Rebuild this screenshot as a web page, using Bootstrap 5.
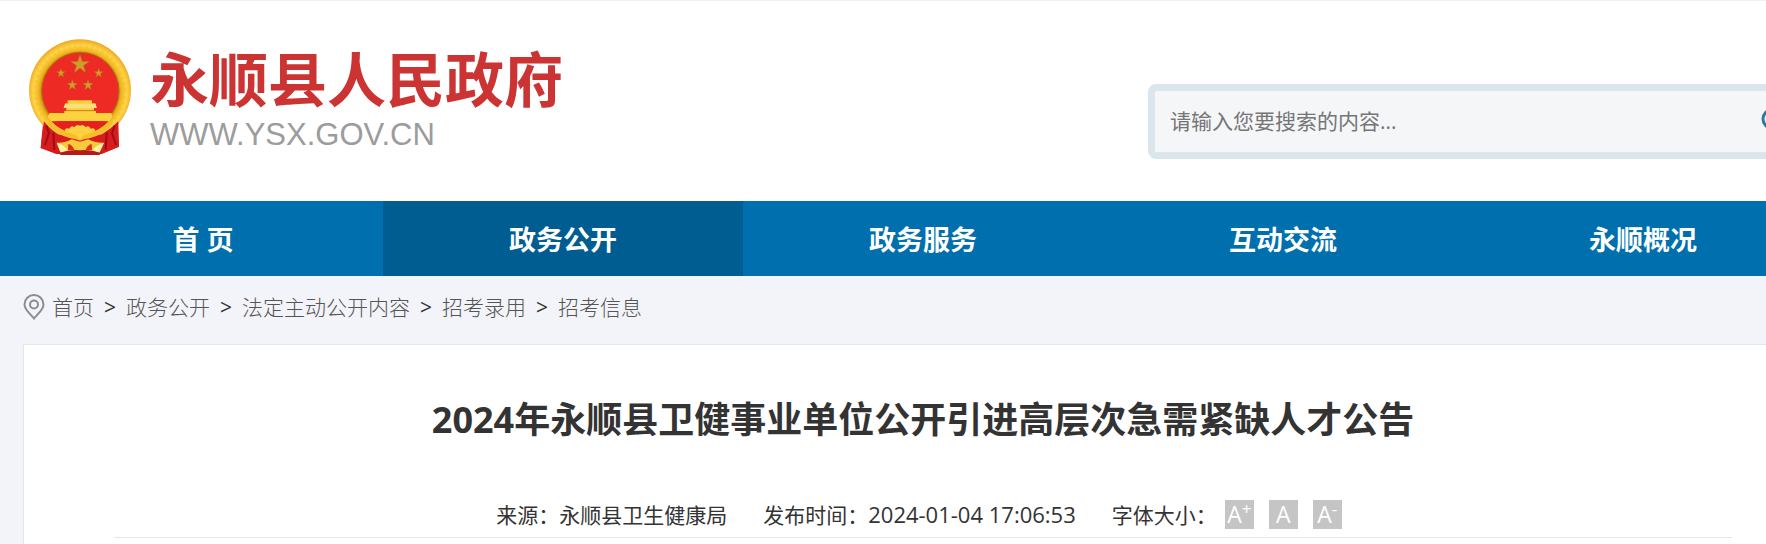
<!DOCTYPE html>
<html lang="zh-CN">
<head>
<meta charset="utf-8">
<meta name="viewport" content="width=device-width, initial-scale=1">
<title>2024年永顺县卫健事业单位公开引进高层次急需紧缺人才公告</title>
<link href="https://cdn.jsdelivr.net/npm/bootstrap@5.3.0/dist/css/bootstrap.min.css" rel="stylesheet">
<style>
  body { font-family: "Open Sans", "Noto Sans CJK SC", sans-serif; font-size: 21px; line-height: 28px; color: #333; background: #f3f4f9; overflow: hidden; }
  /* the page column starts 23px in and runs on past the right edge */
  .shell { margin-left: 23px; width: calc(100% + 34px); }
  .masthead { border-top: 1px solid #f0f0f0; }
  .masthead .shell { height: 200px; }
  .brand { margin-top: 36px; gap: 16px; }
  .brand-name { font-size: 59px; line-height: 84px; color: #cc3433; }
  .brand-url { font-family: "Liberation Sans", Arial, sans-serif; font-size: 31px; line-height: 28px; color: #9c9c9c; }
  .search-box { width: 675px; height: 75px; margin-top: 83px; border: 7px solid #dae6ec; border-radius: 8px; background: #f5f6f8; }
  .search-box input { font-size: 21px; color: #757575; padding: 0 15px; }
  .search-box input::placeholder { color: #757575; opacity: 1; }
  .search-box button { width: 60px; padding: 0; }
  .site-nav { background: #006fae; }
  .site-nav a { height: 75px; font-size: 27px; padding-top: 2px; }
  .site-nav a.active { background: #005d91; }
  .crumbs { height: 68px; padding-bottom: 6px; gap: 7px; }
  .crumbs .breadcrumb { --bs-breadcrumb-divider: ">"; --bs-breadcrumb-divider-color: #333; --bs-breadcrumb-item-padding-x: 10px; }
  .crumbs .breadcrumb-item::before { font-weight: 500; }
  .crumbs a { color: #555; }
  .article { background: #fff; border: 1px solid #e5e6e9; border-bottom: 0; min-height: 200px; padding: 51px 5% 0; }
  .article h1 { font-size: 36px; line-height: 48px; }
  .meta { margin-top: 48px; padding: 8px 8px 8px 0; border-bottom: 1px solid #e6e6e6; gap: 36px; }
  .stamp { font-size: 22px; }
  .size-btns { gap: 15px; margin-left: 8px; }
  .size-btn { width: 29px; height: 29px; background: #c5c5c5; color: #fff; font-size: 23px; line-height: 29px; }
  .size-btn sup { font-size: 17px; top: -8px; line-height: 0; }
</style>
</head>
<body>
<header class="masthead bg-white">
  <div class="shell d-flex justify-content-between align-items-start">
    <a href="#" class="brand d-flex text-decoration-none">
      <svg width="111" height="120" viewBox="69 51 333 360" role="img" aria-label="国徽">
        <defs>
          <radialGradient id="gold" cx="240" cy="215" r="155" gradientUnits="userSpaceOnUse">
            <stop offset=".74" stop-color="#c98a12"/><stop offset=".8" stop-color="#f2b51f"/><stop offset=".9" stop-color="#ffd84a"/><stop offset="1" stop-color="#f0aa25"/>
          </radialGradient>
          <path id="star" d="M0-30 7-9 29-9 11 4 18 26 0 12-18 26-11 4-29-9-7-9Z"/>
        </defs>
        <path d="M130 300 122 384 168 402H303L357 380 350 300Z" fill="#d81c1d"/>
        <path d="M136 318l-6 62M152 330l-4 62M345 318l6 60M328 330l4 60" stroke="#960d12" stroke-width="7"/>
        <ellipse cx="240" cy="211" rx="153" ry="153" fill="url(#gold)"/>
        <circle cx="240" cy="211" r="134" fill="none" stroke="#f3b52a" stroke-width="14" stroke-dasharray="9 8" opacity=".3"/>
        <circle cx="241" cy="213" r="116" fill="#ed2b24" stroke="#a87116" stroke-width="3"/>
        <g fill="#d39b28" stroke="#a55c15" stroke-width="1.5">
          <use href="#star" x="240" y="133"/>
          <use href="#star" transform="translate(183 159) scale(.48)"/>
          <use href="#star" transform="translate(296 159) scale(.48)"/>
          <use href="#star" transform="translate(217 195) scale(.55)"/>
          <use href="#star" transform="translate(264 195) scale(.55)"/>
        </g>
        <path d="M203 241H276V250H286L290 264H282V273H288V279H334L337 291 327 304H154L143 291 149 279H193V273H199V264H191L196 250H203Z" fill="#fcd33f"/>
        <path d="M195 252H287L290 264H191Z" fill="#f9df80"/>
        <path d="M199 272H282" stroke="#c97b1c" stroke-width="3"/>
        <path d="M154 304H327Q300 331 268 338H212Q176 329 154 304Z" fill="#e5201f"/>
        <path d="M132 304Q148 326 174 343L216 352 240 362 264 352 306 343Q334 326 355 304L357 380 303 403 313 370 268 363 240 365 212 363 170 370 178 402 122 384Z" fill="#d71b1e"/>
        <path d="M139 317l8 22-12 36M344 317l-8 22 12 36M160 338l3 52M320 338l-3 52" stroke="#9c0e14" stroke-width="6" fill="none"/>
        <path d="M146 306Q178 346 240 352 302 346 334 306" stroke="#f6bd2c" stroke-width="14" fill="none"/>
        <path d="M195 334Q194 321 208 326 212 314 224 321 230 311 240 317 250 311 256 321 268 314 272 326 286 321 285 334L252 346 240 358 228 346Z" fill="#fcd33f"/>
        <path d="M170 368Q196 369 215 358L240 365 265 358Q284 369 312 368L297 401H184Z" fill="#f7ca38"/>
        <path d="M170 368Q195 375 210 398H182ZM312 368Q287 375 270 398H298Z" fill="#fff3a6"/>
        <path d="M205 371Q218 375 223 390H204ZM275 371Q262 375 257 390H276Z" fill="#e02b1f"/>
        <path d="M176 399Q211 388 240 391 270 388 304 399L298 405H182Z" fill="#b51a19"/>
      </svg>
      <span class="d-flex flex-column">
        <span class="brand-name fw-bold">永顺县人民政府</span>
        <span class="brand-url">WWW.YSX.GOV.CN</span>
      </span>
    </a>
    <form class="search-box d-flex">
      <input type="text" class="form-control border-0 bg-transparent rounded-0 shadow-none" placeholder="请输入您要搜索的内容..." aria-label="搜索">
      <button type="button" class="btn border-0 text-start" aria-label="搜索">
        <svg width="26" height="26" viewBox="0 0 26 26" fill="none" stroke="#2e75a8" stroke-width="3"><circle cx="11" cy="10" r="9"/><path d="M17 17l7 7"/></svg>
      </button>
    </form>
  </div>
</header>
<nav class="site-nav overflow-hidden">
  <div class="shell nav nav-fill flex-nowrap fw-bold">
    <a href="#" class="col d-flex align-items-center justify-content-center text-white text-decoration-none">首 页</a>
    <a href="#" class="col d-flex align-items-center justify-content-center text-white text-decoration-none active">政务公开</a>
    <a href="#" class="col d-flex align-items-center justify-content-center text-white text-decoration-none">政务服务</a>
    <a href="#" class="col d-flex align-items-center justify-content-center text-white text-decoration-none">互动交流</a>
    <a href="#" class="col d-flex align-items-center justify-content-center text-white text-decoration-none">永顺概况</a>
  </div>
</nav>
<main class="shell">
  <div class="crumbs d-flex align-items-center">
    <svg width="22" height="26" viewBox="0 0 22 26" fill="none" stroke="#8b8c8e" stroke-width="2"><path d="M11 24.500C8 20.500 1.500 16 1.500 10.500A9.500 9.500 0 0 1 20.500 10.500C20.500 16 14 20.500 11 24.500Z"/><circle cx="11" cy="10.500" r="4"/></svg>
    <ol class="breadcrumb mb-0 fw-light">
      <li class="breadcrumb-item"><a href="#" class="text-decoration-none">首页</a></li>
      <li class="breadcrumb-item"><a href="#" class="text-decoration-none">政务公开</a></li>
      <li class="breadcrumb-item"><a href="#" class="text-decoration-none">法定主动公开内容</a></li>
      <li class="breadcrumb-item"><a href="#" class="text-decoration-none">招考录用</a></li>
      <li class="breadcrumb-item"><a href="#" class="text-decoration-none">招考信息</a></li>
    </ol>
  </div>
  <article class="article">
    <h1 class="fw-bold text-center mb-0">2024年永顺县卫健事业单位公开引进高层次急需紧缺人才公告</h1>
    <div class="meta d-flex justify-content-center align-items-center">
      <span>来源：永顺县卫生健康局</span>
      <span>发布时间：<time class="stamp" datetime="2024-01-04T17:06:53">2024-01-04 17:06:53</time></span>
      <span class="d-flex align-items-center">字体大小：
        <span class="size-btns d-flex">
          <button type="button" class="size-btn border-0 p-0">A<sup>+</sup></button>
          <button type="button" class="size-btn border-0 p-0">A</button>
          <button type="button" class="size-btn border-0 p-0">A<sup>-</sup></button>
        </span>
      </span>
    </div>
  </article>
</main>
<script src="https://cdn.jsdelivr.net/npm/bootstrap@5.3.0/dist/js/bootstrap.bundle.min.js"></script>
</body>
</html>
